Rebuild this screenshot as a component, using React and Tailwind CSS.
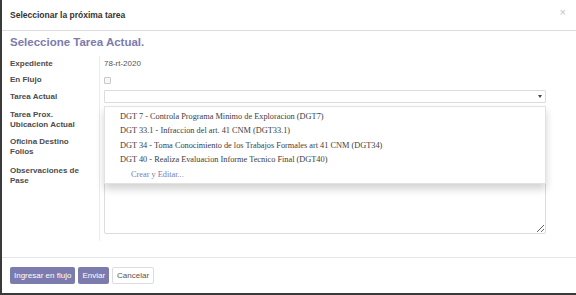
import React from "react";

const sans = { fontFamily: '"Liberation Sans", Arial, sans-serif' };

const options = [
  "DGT 7 - Controla Programa Minimo de Exploracion (DGT7)",
  "DGT 33.1 - Infraccion del art. 41 CNM (DGT33.1)",
  "DGT 34 - Toma Conocimiento de los Trabajos Formales art 41 CNM (DGT34)",
  "DGT 40 - Realiza Evaluacion Informe Tecnico Final (DGT40)",
];

const Label = ({ children, className = "" }) => (
  <div className={`w-[97px] shrink-0 pl-[8px] text-[8px] font-bold leading-[10px] text-[#4c4c4c] ${className}`}>
    {children}
  </div>
);

const App = () => {
  return (
    <div
      className="w-[576px] h-[295px] bg-white flex flex-col border-l-2 border-b-2 border-[#3a3a3a] overflow-hidden"
      style={sans}
    >
      {/* header */}
      <div className="h-[31px] shrink-0 flex items-center justify-between pl-[8px] pr-[10px] border-b border-[#dcdcdc]">
        <span className="text-[8.5px] font-bold text-[#333]">Seleccionar la próxima tarea</span>
        <span className="text-[11px] leading-none text-[#c4c4c4] -mt-[5px]">×</span>
      </div>

      {/* body */}
      <div className="flex-1 flex flex-col">
        <div className="pt-[4px] pl-[8px] h-[25px] text-[11.5px] font-bold leading-[15px] text-[#7c7bad]">
          Seleccione Tarea Actual.
        </div>

        <div className="flex flex-col">
          {/* Expediente */}
          <div className="flex h-[16px]">
            <Label className="self-center">Expediente</Label>
            <div className="flex-1 border-l border-[#ececec] pl-[4px] mr-[30px] flex items-center text-[8px] text-[#555]">
              78-rt-2020
            </div>
          </div>

          {/* En Flujo */}
          <div className="flex h-[16px]">
            <Label className="self-center">En Flujo</Label>
            <div className="flex-1 border-l border-[#ececec] pl-[4px] mr-[30px] flex items-center">
              <span className="w-[7px] h-[7px] border border-[#c8c8c8] rounded-[1px] bg-[#f7f7f7]"></span>
            </div>
          </div>

          {/* Tarea Actual */}
          <div className="flex h-[17px]">
            <Label className="self-center">Tarea Actual</Label>
            <div className="flex-1 border-l border-[#ececec] pl-[4px] mr-[30px] flex items-center relative">
              <div className="w-full h-[13px] border border-[#dcdcdc] rounded-[1px] bg-white flex items-center justify-end pr-[3px]">
                <span className="w-0 h-0 border-l-[2.5px] border-r-[2.5px] border-t-[3px] border-l-transparent border-r-transparent border-t-[#444]"></span>
              </div>

              {/* dropdown */}
              <div className="absolute left-[4px] right-0 top-full mt-[1px] h-[78px] bg-white border border-[#e2e2e2] shadow-[0_5px_8px_rgba(0,0,0,0.18)] z-10 pt-[3px] pl-[15px]"
                style={{ fontFamily: '"Liberation Serif", "Times New Roman", serif' }}
              >
                {options.map((o) => (
                  <div key={o} className="h-[14.4px] text-[8.3px] leading-[14.4px] text-[#3d3d3d] whitespace-nowrap">
                    {o}
                  </div>
                ))}
                <div className="h-[14.4px] pl-[11px] text-[8.3px] leading-[14.4px] text-[#7c7bad]">Crear y Editar...</div>
              </div>
            </div>
          </div>

          {/* Tarea Prox */}
          <div className="flex h-[30px]">
            <Label className="pt-[5px]">Tarea Prox.<br />Ubicacion Actual</Label>
            <div className="flex-1 border-l border-[#ececec] mr-[30px]"></div>
          </div>

          {/* Oficina Destino */}
          <div className="flex h-[28px]">
            <Label className="pt-[2px]">Oficina Destino<br />Folios</Label>
            <div className="flex-1 border-l border-[#ececec] mr-[30px]"></div>
          </div>

          {/* Observaciones */}
          <div className="flex">
            <Label className="pt-[3px]">Observaciones de<br />Pase</Label>
            <div className="flex-1 border-l border-[#ececec] pl-[4px] mr-[30px] pb-[7px]">
              <textarea
                className="block w-full h-[71px] border border-[#dcdcdc] rounded-[2px] bg-white outline-none resize-y"
                readOnly
              />
            </div>
          </div>
        </div>
      </div>

      {/* footer */}
      <div className="h-[36px] shrink-0 border-t border-[#e6e6e6] pt-[9px] pl-[8px] flex items-start gap-[3px]">
        <button className="h-[17px] px-[4px] rounded-[2px] bg-[#7c7bad] text-white text-[8px] leading-none">
          Ingresar en flujo
        </button>
        <button className="h-[17px] px-[4px] rounded-[2px] bg-[#7c7bad] text-white text-[8px] leading-none">
          Enviar
        </button>
        <button className="h-[17px] px-[4px] rounded-[2px] bg-white border border-[#dcdcdc] text-[#555] text-[8px] leading-none">
          Cancelar
        </button>
      </div>
    </div>
  );
};

export default App;
